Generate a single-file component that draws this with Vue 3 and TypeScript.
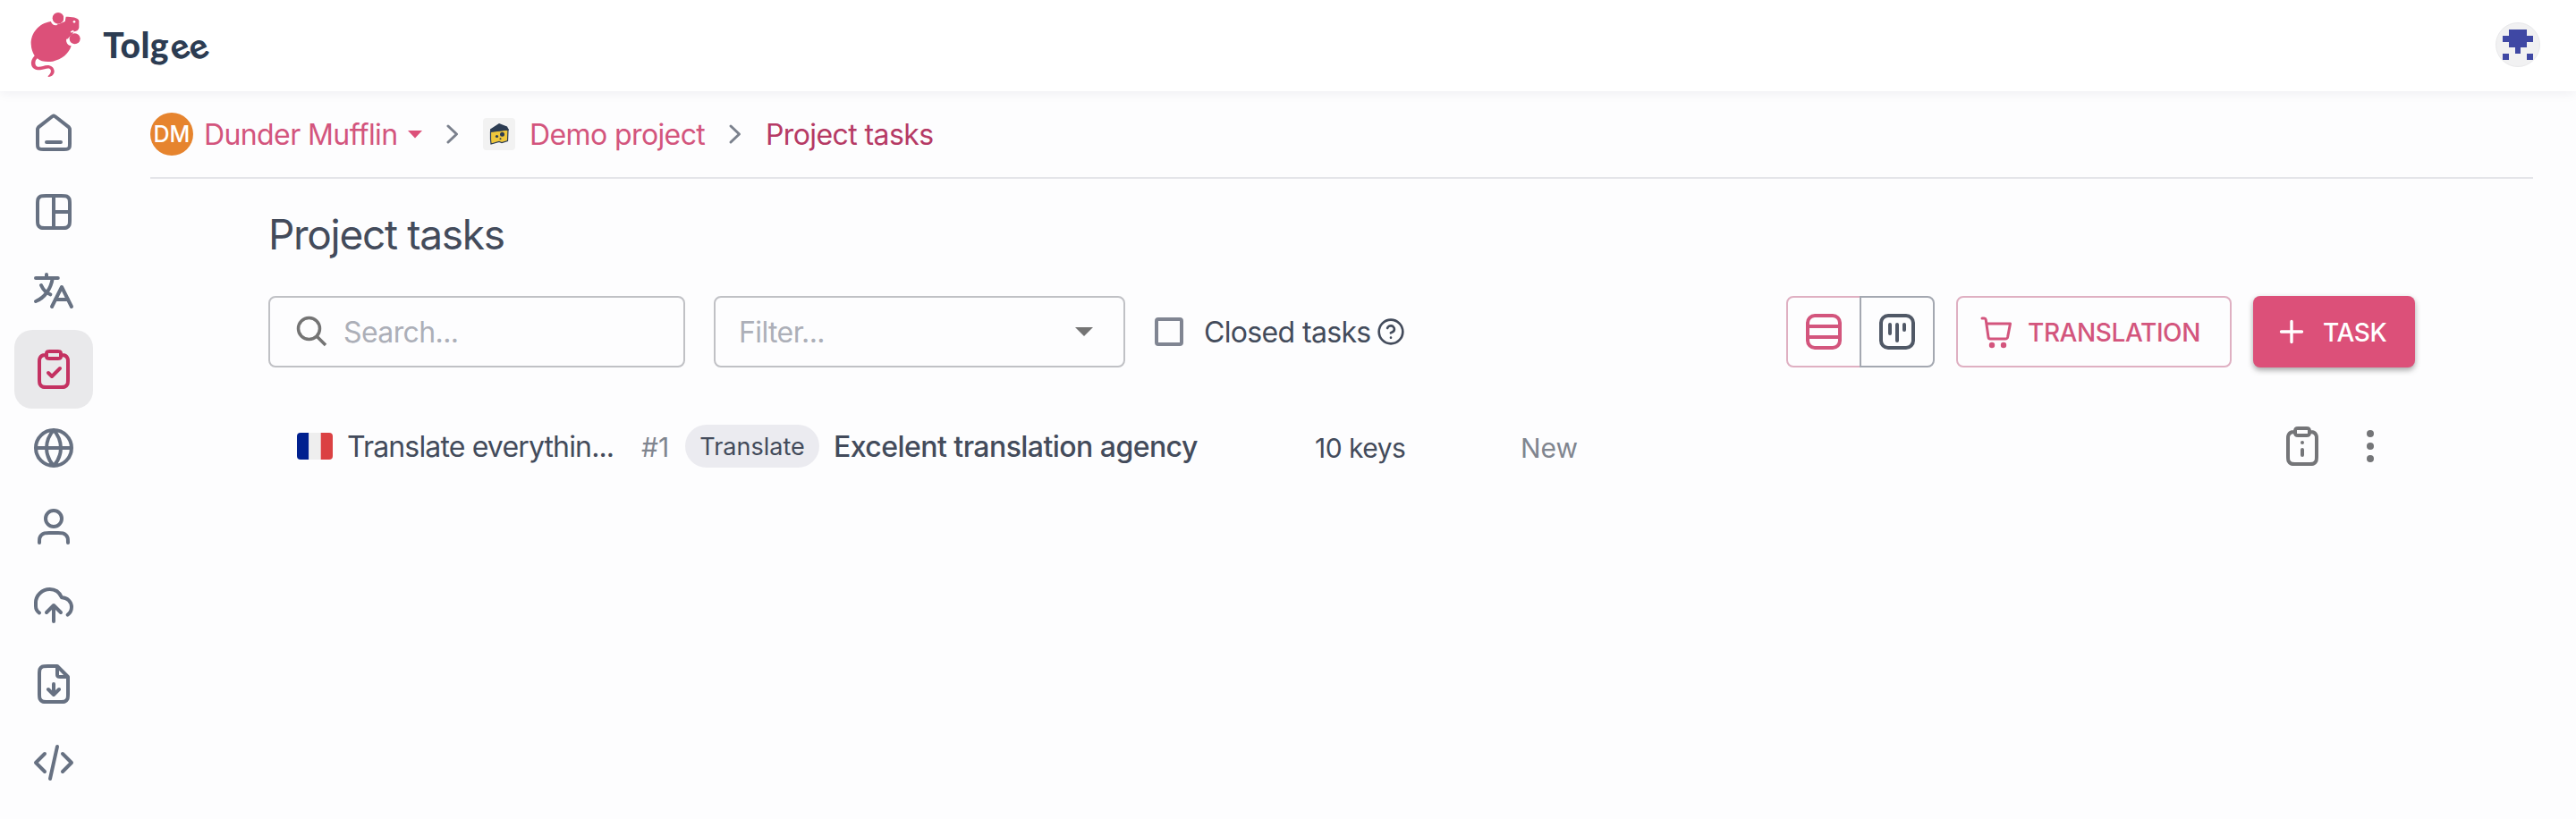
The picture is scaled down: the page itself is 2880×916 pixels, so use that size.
<script setup lang="ts">
interface NavItem {
  name: string
  active?: boolean
  paths: string[]
}

const navItems: NavItem[] = [
  {
    name: 'dashboard',
    paths: [
      'M8 17H16M11.018 2.764L4.235 8.039C3.782 8.392 3.555 8.568 3.392 8.789C3.247 8.984 3.14 9.205 3.074 9.44C3 9.704 3 9.991 3 10.565V17.8C3 18.92 3 19.48 3.218 19.908C3.41 20.284 3.716 20.59 4.092 20.782C4.52 21 5.08 21 6.2 21H17.8C18.92 21 19.48 21 19.908 20.782C20.284 20.59 20.59 20.284 20.782 19.908C21 19.48 21 18.92 21 17.8V10.565C21 9.991 21 9.704 20.926 9.44C20.86 9.205 20.753 8.984 20.608 8.789C20.445 8.568 20.218 8.392 19.765 8.039L12.982 2.764C12.631 2.491 12.455 2.354 12.261 2.302C12.09 2.255 11.91 2.255 11.739 2.302C11.545 2.354 11.369 2.491 11.018 2.764Z',
    ],
  },
  {
    name: 'projects',
    paths: ['M12 3V21M12 12H21M7.8 3H16.2C17.88 3 18.72 3 19.362 3.327C19.926 3.615 20.385 4.074 20.673 4.638C21 5.28 21 6.12 21 7.8V16.2C21 17.88 21 18.72 20.673 19.362C20.385 19.926 19.926 20.385 19.362 20.673C18.72 21 17.88 21 16.2 21H7.8C6.12 21 5.28 21 4.638 20.673C4.074 20.385 3.615 19.926 3.327 19.362C3 18.72 3 17.88 3 16.2V7.8C3 6.12 3 5.28 3.327 4.638C3.615 4.074 4.074 3.615 4.638 3.327C5.28 3 6.12 3 7.8 3Z'],
  },
  {
    name: 'translations',
    paths: ['M12.9 17H20.1M11 21L16.5 10L22 21M2 5H14.4M8 3V5M11.4 5C10.5 11 7 16 2 18M5 9C6 11.2 8 13.4 10.2 14.2'],
  },
  {
    name: 'tasks',
    active: true,
    paths: ['M16 4C16.93 4 17.395 4 17.776 4.102C18.812 4.38 19.62 5.188 19.898 6.224C20 6.605 20 7.07 20 8V17.2C20 18.88 20 19.72 19.673 20.362C19.385 20.926 18.926 21.385 18.362 21.673C17.72 22 16.88 22 15.2 22H8.8C7.12 22 6.28 22 5.638 21.673C5.074 21.385 4.615 20.926 4.327 20.362C4 19.72 4 18.88 4 17.2V8C4 7.07 4 6.605 4.102 6.224C4.38 5.188 5.188 4.38 6.224 4.102C6.605 4 7.07 4 8 4M9 14L11 16L15.5 11.5M9.6 6H14.4C14.96 6 15.24 6 15.454 5.891C15.642 5.795 15.795 5.642 15.891 5.454C16 5.24 16 4.96 16 4.4V3.6C16 3.04 16 2.76 15.891 2.546C15.795 2.358 15.642 2.205 15.454 2.109C15.24 2 14.96 2 14.4 2H9.6C9.04 2 8.76 2 8.546 2.109C8.358 2.205 8.205 2.358 8.109 2.546C8 2.76 8 3.04 8 3.6V4.4C8 4.96 8 5.24 8.109 5.454C8.205 5.642 8.358 5.795 8.546 5.891C8.76 6 9.04 6 9.6 6Z'],
  },
  {
    name: 'languages',
    paths: ['M2 12H22M12 2C17.523 2 22 6.477 22 12C22 17.523 17.523 22 12 22C6.477 22 2 17.523 2 12C2 6.477 6.477 2 12 2ZM12 2C14.501 4.738 15.923 8.292 16 12C15.923 15.708 14.501 19.262 12 22M12 2C9.499 4.738 8.077 8.292 8 12C8.077 15.708 9.499 19.262 12 22'],
  },
  {
    name: 'members',
    paths: ['M20 21C20 19.604 20 18.907 19.828 18.339C19.44 17.061 18.439 16.06 17.161 15.672C16.593 15.5 15.896 15.5 14.5 15.5H9.5C8.104 15.5 7.407 15.5 6.839 15.672C5.561 16.06 4.56 17.061 4.172 18.339C4 18.907 4 19.604 4 21M16.5 7.5C16.5 9.985 14.485 12 12 12C9.515 12 7.5 9.985 7.5 7.5C7.5 5.015 9.515 3 12 3C14.485 3 16.5 5.015 16.5 7.5Z'],
  },
  {
    name: 'import',
    paths: ['M4 16.242C2.794 15.435 2 14.06 2 12.5C2 12.2 2 11 2 10.5C2 6.5 5.5 3 9.800 3C12.800 3 15.300 4.800 16.500 7.600C19.600 7.600 22 10 22 13C22 14.700 21.206 16.300 19.800 17.300M8 16L12 12M12 12L16 16M12 12V21'],
  },
  {
    name: 'export',
    paths: ['M14 2.3V6.4C14 6.96 14 7.24 14.109 7.454C14.205 7.642 14.358 7.795 14.546 7.891C14.76 8 15.04 8 15.6 8H19.7M9 15L12 18M12 18L15 15M12 18V12M14 2H8.8C7.12 2 6.28 2 5.638 2.327C5.074 2.615 4.615 3.074 4.327 3.638C4 4.28 4 5.12 4 6.8V17.2C4 18.88 4 19.72 4.327 20.362C4.615 20.926 5.074 21.385 5.638 21.673C6.28 22 7.12 22 8.8 22H15.2C16.88 22 17.72 22 18.362 21.673C18.926 21.385 19.385 20.926 19.673 20.362C20 19.72 20 18.88 20 17.2V8L14 2Z'],
  },
  {
    name: 'developer',
    paths: ['M17 17L22 12L17 7M7 7L2 12L7 17M14 3L10 21'],
  },
]

const clipboardPath =
  'M16 4C16.93 4 17.395 4 17.776 4.102C18.812 4.38 19.62 5.188 19.898 6.224C20 6.605 20 7.07 20 8V17.2C20 18.88 20 19.72 19.673 20.362C19.385 20.926 18.926 21.385 18.362 21.673C17.72 22 16.88 22 15.2 22H8.8C7.12 22 6.28 22 5.638 21.673C5.074 21.385 4.615 20.926 4.327 20.362C4 19.72 4 18.88 4 17.2V8C4 7.07 4 6.605 4.102 6.224C4.38 5.188 5.188 4.38 6.224 4.102C6.605 4 7.07 4 8 4M9.6 6H14.4C15.6 6 16 5.6 16 4.4V3.6C16 2.4 15.6 2 14.4 2H9.6C8.4 2 8 2.4 8 3.6V4.4C8 5.6 8.4 6 9.6 6Z'

// Five by five identicon, one string per row
const identicon = ['.###.', '#####', '.###.', '..#..', '#...#']
const pixels = identicon.flatMap((row, y) =>
  [...row].map((c, x) => ({ c, x, y })).filter((p) => p.c === '#'),
)
</script>

<template>
  <div class="page">
    <header class="topbar">
      <svg class="mouse" viewBox="100 36 174 226">
        <path d="M172 72C130 78 104 112 105 148C106 166 111 178 117 187C108 196 104 208 106 217C109 230 120 236 136 235C150 234 160 227 168 231C175 236 172 247 161 256L164 258C176 258 184 248 183 238C182 226 172 219 160 219C148 219 138 226 127 224C118 221 118 210 121 202L126 196C138 207 158 209 178 206C208 200 232 180 240 154C229 152 223 144 224 134L246 112V106C262 106 267 98 266 88V70C264 58 240 56 222 56L219 72L200 80L186 84C178 83 174 78 172 72Z" />
        <circle cx="196" cy="61" r="19" />
        <circle cx="252" cy="130" r="18" />
        <path class="slit" d="M174 68C177 79 184 83 190 82M217 56V68M226 133C227 145 234 150 242 150M246 104L240 107" />
        <circle class="eye" cx="250" cy="73" r="4" />
      </svg>
      <div class="brand">Tolg<span class="tilt">e</span><span class="tilt">e</span></div>
      <svg class="user" viewBox="0 0 50 50">
        <circle cx="25" cy="25" r="24.5" fill="#f1f1f2" stroke="#e9e9eb" />
        <g shape-rendering="crispEdges">
          <rect v-for="p in pixels" :key="`${p.x}-${p.y}`" :x="8 + p.x * 6.8" :y="8 + p.y * 6.8" width="6.8" height="6.8" fill="#3f48a4" />
        </g>
      </svg>
    </header>

    <div class="body">
      <nav class="sidebar">
        <a v-for="item in navItems" :key="item.name" class="nav-item" :class="{ active: item.active }">
          <svg class="icon" viewBox="0 0 24 24"><path v-for="d in item.paths" :key="d" :d="d" /></svg>
        </a>
      </nav>

      <main class="main">
        <div class="crumbs">
          <span class="org">DM</span>
          <span class="crumb c1">Dunder Mufflin</span>
          <svg class="caret" viewBox="0 0 16 9"><path d="M0 0H16L8 8.6Z" /></svg>
          <svg class="chev" viewBox="0 0 14 22"><path d="M2 2L11.500 11L2 20" /></svg>
          <svg class="cheese" viewBox="0 0 36 36">
            <rect width="36" height="36" rx="4" fill="#f2f2f2" />
            <path d="M8.500 15.500L28 13L27.500 25.500L21 27.500L18 26.500L9 29L8.500 24Z" fill="#efc73c" stroke="#2c3c52" stroke-width="1.200" />
            <path d="M8 12.500L18 6L27 9.500L29 13.500L8 15.500Z" fill="#2c3c52" />
            <circle cx="21.500" cy="18.300" r="2.500" fill="#2c3c52" />
            <circle cx="15.500" cy="20.500" r="1.600" fill="#2c3c52" />
            <circle cx="19.500" cy="23.200" r="1" fill="#2c3c52" />
          </svg>
          <span class="crumb c2">Demo project</span>
          <svg class="chev second" viewBox="0 0 14 22"><path d="M2 2L11.500 11L2 20" /></svg>
          <span class="crumb c3">Project tasks</span>
        </div>

        <section class="content">
          <h1>Project tasks</h1>
          <div class="toolbar">
            <div class="field search">
              <svg class="search-icon" viewBox="0 0 36 36"><circle cx="14.500" cy="14.500" r="12" /><path d="M23 23L33 33" /></svg>
              <span class="ph">Search...</span>
            </div>
            <div class="field filter">
              <span class="ph">Filter...</span>
              <svg class="arrow" viewBox="0 0 20 10"><path d="M0 0H20L10 10Z" /></svg>
            </div>
            <span class="box"></span>
            <span class="closed">Closed tasks</span>
            <svg class="help" viewBox="0 0 24 24">
              <path d="M9.090 9C9.325 8.332 9.789 7.768 10.400 7.409C11.011 7.050 11.729 6.919 12.427 7.038C13.125 7.158 13.759 7.521 14.215 8.063C14.671 8.606 14.921 9.292 14.920 10C14.920 12 11.920 13 11.920 13M12 17H12.010M22 12C22 17.523 17.523 22 12 22C6.477 22 2 17.523 2 12C2 6.477 6.477 2 12 2C17.523 2 22 6.477 22 12Z" />
            </svg>
            <div class="toggle">
              <span class="seg on">
                <svg class="icon" viewBox="0 0 24 24"><rect x="3" y="3" width="18" height="18" rx="4" /><path d="M3 9H21M3 15H21" /></svg>
              </span>
              <span class="seg">
                <svg class="icon" viewBox="0 0 24 24"><rect x="3" y="3" width="18" height="18" rx="4" /><path d="M8 8V13M12 8V17M16 8V11" /></svg>
              </span>
            </div>
            <button class="btn outlined">
              <svg class="cart" viewBox="0 0 36 36">
                <path d="M2 3H4.500C5.500 3 6 3.500 6.200 4.500L9 24C9.200 25.500 10 26 11 26H28C29.500 26 30.300 25.300 30.600 24L33.500 9H7" />
                <circle cx="13" cy="33" r="3.200" /><circle cx="26" cy="33" r="3.200" />
              </svg>
              <span class="label">TRANSLATION</span>
            </button>
            <button class="btn filled">
              <svg class="plus" viewBox="0 0 26 26"><path d="M13 1.500V24.500M1.500 13H24.500" /></svg>
              <span class="label">TASK</span>
            </button>
          </div>

          <div class="row">
            <svg class="flag" viewBox="0 0 40 30">
              <path d="M4 0H13.300V30H4Q0 30 0 26V4Q0 0 4 0Z" fill="#00208f" />
              <path d="M13.300 0H26.700V30H13.300Z" fill="#eeeeee" />
              <path d="M26.700 0H36Q40 0 40 4V26Q40 30 36 30H26.700Z" fill="#db4143" />
            </svg>
            <span class="name">Translate everythin...</span>
            <span class="num">#1</span>
            <span class="chip"><span>Translate</span></span>
            <span class="agency">Excelent translation agency</span>
            <span class="keys">10 keys</span>
            <span class="state">New</span>
            <svg class="icon info" viewBox="0 0 24 24"><path :d="clipboardPath" /><path d="M12 10V10.010M12 14V17" /></svg>
            <svg class="dots" viewBox="0 0 8 36"><circle cx="4" cy="4" r="4" /><circle cx="4" cy="18" r="4" /><circle cx="4" cy="32" r="4" /></svg>
          </div>
        </section>
      </main>
    </div>
  </div>
</template>

<style>
body {
  background: #fdfdfe;
}
</style>

<style scoped>
.page {
  width: 2880px;
  height: 916px;
  overflow: hidden;
  background: #fdfdfe;
  color: #434b5b;
  font-family: Inter, "Liberation Sans", sans-serif;
  font-size: 30px;
  white-space: nowrap;
}
svg {
  display: block;
  flex: none;
  overflow: visible;
}
span {
  flex: none;
}
.topbar {
  position: relative;
  display: flex;
  align-items: center;
  height: 102px;
  background: #fff;
  box-shadow: 0 0 14px rgba(30, 30, 60, 0.08);
}
.mouse {
  width: 58px;
  height: 75.300px;
  margin: -3px 0 0 33.300px;
  fill: #dc5079;
}
.mouse .slit {
  fill: none;
  stroke: #fff;
  stroke-width: 5;
  stroke-linecap: round;
}
.mouse .eye {
  fill: #fff;
}
.brand {
  width: 130px;
  margin: -2px 0 0 24px;
  color: #2c3c52;
  font: 900 39px/50px Lato, Inter, sans-serif;
  letter-spacing: 0.4px;
}
.tilt {
  display: inline-block;
  transform: translateY(1px) rotate(-24deg);
}
.user {
  width: 50px;
  height: 50px;
  margin: -2px 40px 0 auto;
}
.body {
  display: flex;
}
.sidebar {
  width: 120px;
  padding: 3px 0 0 16px;
  box-sizing: border-box;
}
.nav-item {
  display: flex;
  align-items: center;
  justify-content: center;
  width: 88px;
  height: 88px;
  border-radius: 20px;
  color: #677182;
}
.nav-item.active {
  background: #e9e9eb;
  color: #c43262;
}
.icon {
  width: 48px;
  height: 48px;
  fill: none;
  stroke: currentColor;
  stroke-width: 2;
  stroke-linecap: round;
  stroke-linejoin: round;
}
.main {
  width: 2664px;
  margin-left: 48px;
}
.crumbs {
  display: flex;
  align-items: center;
  height: 96px;
  border-bottom: 2px solid #e4e5e9;
  font-size: 32px;
  line-height: 40px;
  color: #d3557d;
}
.crumb {
  padding-top: 2px;
  letter-spacing: -0.6px;
}
.org {
  width: 48px;
  height: 48px;
  border-radius: 50%;
  background: #e6842e;
  color: #fff;
  font-size: 25px;
  font-weight: 500;
  line-height: 49px;
  text-align: center;
}
.c1 {
  width: 216px;
  margin-left: 12px;
}
.caret {
  width: 16px;
  height: 9px;
  margin-left: 12px;
  fill: #dc5079;
}
.chev {
  width: 14px;
  height: 22px;
  margin-left: 27px;
  fill: none;
  stroke: #7b818d;
  stroke-width: 3;
  stroke-linecap: round;
  stroke-linejoin: round;
}
.cheese {
  width: 36px;
  height: 36px;
  margin-left: 27px;
}
.c2 {
  width: 197px;
  margin-left: 16px;
}
.chev.second {
  margin-left: 26px;
}
.c3 {
  margin-left: 27px;
  color: #b63a65;
}
.content {
  width: 2400px;
  margin-left: 132px;
}
h1 {
  height: 60px;
  margin: 32px 0 39px;
  font-size: 46px;
  font-weight: 400;
  line-height: 60px;
  letter-spacing: -1.300px;
}
.toolbar {
  display: flex;
  align-items: center;
  height: 80px;
}
.field {
  display: flex;
  align-items: center;
  box-sizing: border-box;
  height: 80px;
  border: 2px solid #c0c1c5;
  border-radius: 8px;
  color: #acafb8;
  font-size: 32px;
}
.ph {
  padding-top: 1px;
  letter-spacing: -0.600px;
}
.search {
  width: 466px;
  padding-left: 29px;
}
.search-icon {
  width: 36px;
  height: 36px;
  margin-right: 17px;
  fill: none;
  stroke: #747474;
  stroke-width: 3.500;
}
.filter {
  width: 460px;
  margin-left: 32px;
  padding: 0 34px 0 26px;
  justify-content: space-between;
}
.arrow {
  width: 20px;
  height: 10px;
  fill: #747474;
}
.box {
  width: 24px;
  height: 24px;
  margin-left: 33px;
  border: 4px solid #808592;
  border-radius: 4px;
}
.closed {
  width: 186px;
  margin-left: 23px;
  padding-top: 1px;
  font-size: 32px;
  letter-spacing: -0.650px;
}
.help {
  width: 32px;
  height: 32px;
  margin-left: 7px;
  fill: none;
  stroke: #434b5b;
  stroke-width: 2;
  stroke-linecap: round;
  stroke-linejoin: round;
}
.toggle {
  display: flex;
  margin-left: auto;
}
.seg {
  display: flex;
  align-items: center;
  justify-content: center;
  box-sizing: border-box;
  width: 84px;
  height: 80px;
  border: 2px solid #a4a8b1;
  border-radius: 0 8px 8px 0;
  color: #505866;
}
.seg.on {
  margin-right: -2px;
  border-color: #dfb0c2;
  border-radius: 8px 0 0 8px;
  color: #d3557d;
}
.btn {
  display: flex;
  align-items: center;
  box-sizing: border-box;
  height: 80px;
  margin-left: 24px;
  border: 0;
  border-radius: 8px;
  font: 500 28px/40px Inter, sans-serif;
}
.label {
  padding-top: 2px;
  letter-spacing: -0.400px;
}
.outlined {
  width: 308px;
  padding: 0 0 0 25px;
  border: 2px solid #dfb0c2;
  background: none;
  color: #d3557d;
}
.cart {
  width: 36px;
  height: 36px;
  margin-right: 17px;
  fill: none;
  stroke: currentColor;
  stroke-width: 3;
  stroke-linecap: round;
  stroke-linejoin: round;
}
.cart circle {
  fill: currentColor;
  stroke: none;
}
.filled {
  width: 181px;
  padding: 0 0 0 30px;
  background: #dc5079;
  color: #fff;
  box-shadow: 0 3px 6px rgba(0, 0, 0, 0.35);
}
.plus {
  width: 26px;
  height: 26px;
  margin-right: 22px;
  fill: none;
  stroke: currentColor;
  stroke-width: 3.400;
  stroke-linecap: round;
}
.row {
  display: flex;
  align-items: center;
  height: 60px;
  margin-top: 58px;
  padding-left: 32px;
}
.flag {
  width: 40px;
  height: 30px;
}
.name {
  width: 300px;
  margin-left: 16px;
  padding-top: 1px;
  font-size: 32px;
  letter-spacing: -0.850px;
}
.num {
  width: 34px;
  margin-left: 29px;
  padding-top: 2px;
  color: #80858f;
}
.chip {
  display: flex;
  justify-content: center;
  width: 150px;
  height: 48px;
  margin-left: 15px;
  border-radius: 24px;
  background: #ebebf0;
  font-size: 27px;
  line-height: 49px;
}
.agency {
  width: 410px;
  margin-left: 16px;
  padding-top: 1px;
  font-size: 32px;
  font-weight: 500;
  letter-spacing: -0.550px;
}
.keys {
  width: 110px;
  margin-left: 128px;
  padding-top: 3px;
  letter-spacing: -0.500px;
}
.state {
  width: 70px;
  margin-left: 120px;
  padding-top: 3px;
  color: #80858f;
}
.info {
  margin-left: auto;
  color: #747578;
}
.dots {
  width: 8px;
  height: 36px;
  margin: 0 46px 0 48px;
  fill: #747578;
}
</style>
